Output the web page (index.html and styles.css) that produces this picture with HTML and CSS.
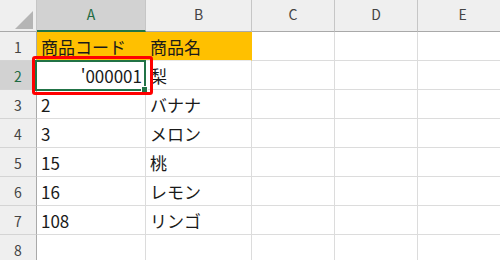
FILE: index.html
```html
<!DOCTYPE html>
<html lang="ja">

<head>
	<meta charset="utf-8" />
	<meta name="viewport" content="width=device-width, initial-scale=1.0" />
	<title>商品リスト</title>
	<link rel="stylesheet" href="styles.css">
</head>

<body>
	<div class="sheet">
		<!-- column headers -->
		<div class="corner"><span class="corner-tri"></span></div>
		<div class="col-head active">A</div>
		<div class="col-head">B</div>
		<div class="col-head">C</div>
		<div class="col-head">D</div>
		<div class="col-head">E</div>

		<div class="row-head">1</div>
		<div class="cell head-fill">商品コード</div>
		<div class="cell head-fill">商品名</div>
		<div class="cell"></div>
		<div class="cell"></div>
		<div class="cell"></div>

		<div class="row-head active">2</div>
		<div class="cell selected num">'000001
			<span class="sel-box"><span class="fill-handle"></span></span>
			<span class="mark-box"></span>
		</div>
		<div class="cell">梨</div>
		<div class="cell"></div>
		<div class="cell"></div>
		<div class="cell"></div>

		<div class="row-head">3</div>
		<div class="cell">2</div>
		<div class="cell">バナナ</div>
		<div class="cell"></div>
		<div class="cell"></div>
		<div class="cell"></div>

		<div class="row-head">4</div>
		<div class="cell">3</div>
		<div class="cell">メロン</div>
		<div class="cell"></div>
		<div class="cell"></div>
		<div class="cell"></div>

		<div class="row-head">5</div>
		<div class="cell">15</div>
		<div class="cell">桃</div>
		<div class="cell"></div>
		<div class="cell"></div>
		<div class="cell"></div>

		<div class="row-head">6</div>
		<div class="cell">16</div>
		<div class="cell">レモン</div>
		<div class="cell"></div>
		<div class="cell"></div>
		<div class="cell"></div>

		<div class="row-head">7</div>
		<div class="cell">108</div>
		<div class="cell">リンゴ</div>
		<div class="cell"></div>
		<div class="cell"></div>
		<div class="cell"></div>

		<div class="row-head">8</div>
		<div class="cell"></div>
		<div class="cell"></div>
		<div class="cell"></div>
		<div class="cell"></div>
		<div class="cell"></div>
	</div>
</body>

</html>
```

FILE: styles.css
```css
body {
	margin: 0;
	background: #fff;
	font-family: "Noto Sans CJK JP", "Noto Sans", sans-serif;
	overflow: hidden;
}

.sheet {
	display: grid;
	grid-template-columns: 37px 109px 106px 83px 83px 90px;
	grid-template-rows: 32px repeat(8, 29px);
}

.corner,
.col-head,
.row-head {
	background: #efefef;
	color: #444;
	font-size: 14px;
	display: flex;
	align-items: center;
	justify-content: center;
	box-sizing: border-box;
}

.corner {
	border-right: 1px solid #c6c6c6;
	border-bottom: 1px solid #a9a9a9;
	position: relative;
}

.corner-tri {
	position: absolute;
	left: 15px;
	top: 11px;
	width: 0;
	height: 0;
	border-left: 18px solid transparent;
	border-bottom: 18px solid #b5b5b5;
}

.col-head {
	border-right: 1px solid #c6c6c6;
	border-bottom: 1px solid #a9a9a9;
	padding-bottom: 3px;
}

.col-head.active {
	background: #d2d2d2;
	color: #1f6b42;
	border-bottom: 2px solid #217346;
}

.row-head {
	border-right: 1px solid #a9a9a9;
	border-bottom: 1px solid #d4d4d4;
	padding-top: 2px;
}

.row-head.active {
	background: #d2d2d2;
	color: #1f6b42;
}

.cell {
	box-sizing: border-box;
	border-right: 1px solid #dcdcdc;
	border-bottom: 1px solid #dcdcdc;
	padding: 0 4px;
	font-size: 17px;
	line-height: 29px;
	color: #1a1a1a;
	white-space: nowrap;
}

.head-fill {
	background: #ffc000;
	border-right-color: #ffc000;
	border-bottom-color: #e8e8e8;
}

.num {
	text-align: right;
	padding-right: 3px;
}

.selected {
	position: relative;
}

/* active cell outline with its fill handle */
.sel-box {
	position: absolute;
	left: -2px;
	top: -1px;
	right: -1px;
	bottom: -2px;
	border: 2px solid #217346;
}

.fill-handle {
	position: absolute;
	right: -4px;
	bottom: -4px;
	width: 5px;
	height: 5px;
	background: #217346;
	border: 1px solid #fff;
}

/* red callout around the cell */
.mark-box {
	position: absolute;
	left: -5px;
	top: -5px;
	right: -8px;
	bottom: -6px;
	border: 3px solid #ff0000;
	border-radius: 3px;
}
```
